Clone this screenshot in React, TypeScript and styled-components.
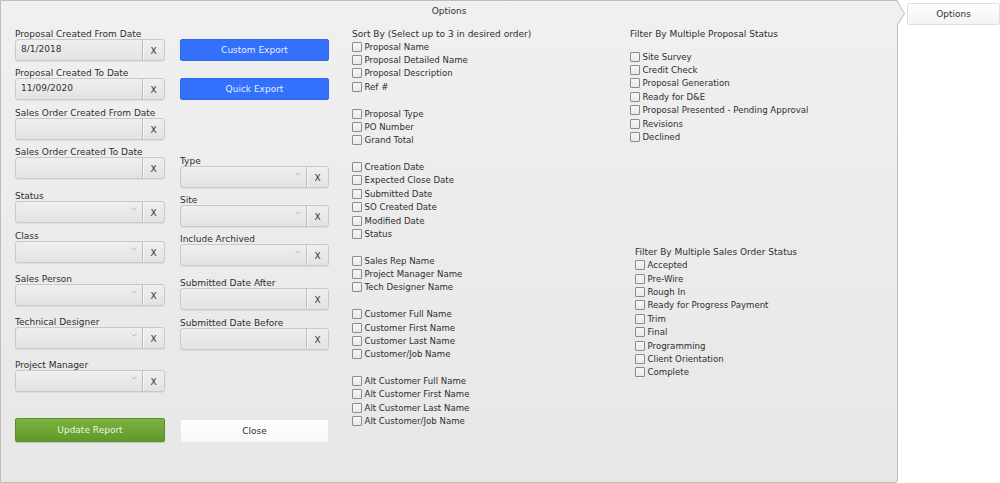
import styled, { createGlobalStyle } from 'styled-components';

const GlobalStyle = createGlobalStyle`
  html, body {
    margin: 0;
    padding: 0;
    background: #fff;
  }

  body {
    font-family: "DejaVu Sans", Verdana, sans-serif;
    font-size: 9px;
    color: #2e2e2e;
  }
`;

const Page = styled.div`
  display: flex;
  align-items: flex-start;
  width: 1000px;
  height: 483px;
  overflow: hidden;
`;

const Panel = styled.section`
  position: relative;
  flex: none;
  box-sizing: border-box;
  width: 898px;
  height: 483px;
  padding-top: 3px;
  border: 1px solid #bdbdbd;
  border-radius: 0 0 3px 0;
  background: linear-gradient(#f0f0f0, #e7e7e7);
`;

const Pointer = styled.svg`
  position: absolute;
  top: 0;
  left: 100%;
`;

const PanelTitle = styled.div`
  line-height: 10px;
  padding-top: 2px;
  text-align: center;
  color: #333;
`;

const Body = styled.div`
  display: flex;
  align-items: flex-start;
  padding: 11px 0 0 14px;
`;

const FormColumn = styled.div<{ $width: number; $gap: number }>`
  display: flex;
  flex-direction: column;
  width: ${props => props.$width}px;
  margin-right: ${props => props.$gap}px;
`;

const Field = styled.div<{ $mt: number }>`
  margin-top: ${props => props.$mt}px;
`;

const Label = styled.div`
  line-height: 10px;
  padding-top: 2px;
  white-space: nowrap;
`;

const InputRow = styled.div`
  display: flex;
  box-sizing: border-box;
  height: 22px;
  border: 1px solid #c9c9c9;
  border-radius: 3px;
  background: linear-gradient(#efefef, #e3e3e3);
  box-shadow: 0 1px 1px rgba(0, 0, 0, 0.06);
`;

const ValueArea = styled.div<{ $select?: boolean }>`
  flex: 1;
  display: flex;
  align-items: ${props => (props.$select ? 'flex-start' : 'center')};
  justify-content: ${props => (props.$select ? 'flex-end' : 'flex-start')};
  padding: ${props => (props.$select ? '5px 5px 0 5px' : '0 5px 2px 5px')};
  color: #333;
`;

const ClearButton = styled.div`
  display: flex;
  align-items: center;
  justify-content: center;
  width: 22px;
  padding-top: 2px;
  box-sizing: border-box;
  border-left: 1px solid #bcbcbc;
  box-shadow: inset 1px 0 0 #f7f7f7;
  font-size: 9px;
  color: #333;
`;

const ActionButton = styled.div<{ $variant: 'blue' | 'green' | 'white'; $mt: number; $height: number }>`
  display: flex;
  align-items: center;
  justify-content: center;
  box-sizing: border-box;
  height: ${props => props.$height}px;
  margin-top: ${props => props.$mt}px;
  border-radius: 2px;
  ${props =>
    props.$variant === 'blue' &&
    `
    background: #3370fb;
    border: 1px solid #2f68ec;
    color: #e6edff;
  `}
  ${props =>
    props.$variant === 'green' &&
    `
    background: linear-gradient(#7bb33f, #5f992b);
    border: 1px solid #5b8e2c;
    color: #e9f3de;
    box-shadow: 0 1px 1px rgba(0, 0, 0, 0.15);
  `}
  ${props =>
    props.$variant === 'white' &&
    `
    background: linear-gradient(#ffffff, #f8f8f8);
    border: 1px solid #e8e8e8;
    color: #2e2e2e;
  `}
`;

const SortColumn = styled.div`
  width: 278px;
  flex: none;
`;

const FilterColumn = styled.div`
  flex: 1;
`;

const FilterBlock = styled.div<{ $mt: number; $indent: number }>`
  margin-top: ${props => props.$mt}px;
  padding-left: ${props => props.$indent}px;
`;

const Heading = styled.div`
  line-height: 10px;
  padding-top: 2px;
  white-space: nowrap;
`;

const CheckList = styled.div<{ $mt: number }>`
  margin-top: ${props => props.$mt}px;
`;

const CheckRow = styled.label`
  display: flex;
  align-items: center;
  height: 13.375px;
  font-size: 8.6px;
  white-space: nowrap;
`;

const Box = styled.span`
  flex: none;
  box-sizing: border-box;
  width: 10px;
  height: 10px;
  margin-right: 2.5px;
  border: 1px solid #8c8c8c;
  border-radius: 1px;
  background: linear-gradient(#f6f6f6, #e9e9e9);
`;

const Spacer = styled.div`
  height: 13.375px;
`;

const Tab = styled.div`
  flex: none;
  display: flex;
  align-items: center;
  justify-content: center;
  box-sizing: border-box;
  width: 93px;
  height: 22px;
  margin: 3px 0 0 9px;
  border: 1px solid #dedede;
  border-radius: 2px;
  background: linear-gradient(#ffffff, #f3f3f3);
  color: #333;
`;

const Chevron = () => (
  <svg width="6" height="4" viewBox="0 0 6 4">
    <polyline points="0.5,0.5 3,3 5.5,0.5" fill="none" stroke="#b8b8b8" strokeWidth="1" />
  </svg>
);

interface FieldProps {
  label: string;
  value?: string;
  select?: boolean;
  mt: number;
}

function InputField({ label, value, select, mt }: FieldProps) {
  return (
    <Field $mt={mt}>
      <Label>{label}</Label>
      <InputRow>
        <ValueArea $select={select}>{select ? <Chevron /> : value}</ValueArea>
        <ClearButton>X</ClearButton>
      </InputRow>
    </Field>
  );
}

function Check({ text }: { text: string }) {
  return (
    <CheckRow>
      <Box />
      {text}
    </CheckRow>
  );
}

const sortGroups = [
  ['Proposal Name', 'Proposal Detailed Name', 'Proposal Description', 'Ref #'],
  ['Proposal Type', 'PO Number', 'Grand Total'],
  ['Creation Date', 'Expected Close Date', 'Submitted Date', 'SO Created Date', 'Modified Date', 'Status'],
  ['Sales Rep Name', 'Project Manager Name', 'Tech Designer Name'],
  ['Customer Full Name', 'Customer First Name', 'Customer Last Name', 'Customer/Job Name'],
  ['Alt Customer Full Name', 'Alt Customer First Name', 'Alt Customer Last Name', 'Alt Customer/Job Name'],
];

const proposalStatuses = [
  'Site Survey',
  'Credit Check',
  'Proposal Generation',
  'Ready for D&E',
  'Proposal Presented - Pending Approval',
  'Revisions',
  'Declined',
];

const salesOrderStatuses = [
  'Accepted',
  'Pre-Wire',
  'Rough In',
  'Ready for Progress Payment',
  'Trim',
  'Final',
  'Programming',
  'Client Orientation',
  'Complete',
];

export default function App() {
  return (
    <>
      <GlobalStyle />
      <Page>
        <Panel>
          <Pointer width="9" height="26" viewBox="0 0 9 26">
            <polygon points="0,1 8,12.5 0,24" fill="#efefef" />
            <polyline points="0.5,1 7.5,12.5 0.5,24" fill="none" stroke="#bdbdbd" strokeWidth="1" />
          </Pointer>
          <PanelTitle>Options</PanelTitle>
          <Body>
            <FormColumn $width={150} $gap={15}>
              <InputField label="Proposal Created From Date" value="8/1/2018" mt={0} />
              <InputField label="Proposal Created To Date" value="11/09/2020" mt={5} />
              <InputField label="Sales Order Created From Date" mt={6} />
              <InputField label="Sales Order Created To Date" mt={5} />
              <InputField label="Status" select mt={10} />
              <InputField label="Class" select mt={6} />
              <InputField label="Sales Person" select mt={9} />
              <InputField label="Technical Designer" select mt={9} />
              <InputField label="Project Manager" select mt={9} />
              <ActionButton $variant="green" $mt={26} $height={24}>
                Update Report
              </ActionButton>
            </FormColumn>

            <FormColumn $width={149} $gap={23}>
              <ActionButton $variant="blue" $mt={12} $height={22}>
                Custom Export
              </ActionButton>
              <ActionButton $variant="blue" $mt={17} $height={22}>
                Quick Export
              </ActionButton>
              <InputField label="Type" select mt={54} />
              <InputField label="Site" select mt={5} />
              <InputField label="Include Archived" select mt={5} />
              <InputField label="Submitted Date After" mt={10} />
              <InputField label="Submitted Date Before" mt={6} />
              <ActionButton $variant="white" $mt={69} $height={24}>
                Close
              </ActionButton>
            </FormColumn>

            <SortColumn>
              <Heading>Sort By (Select up to 3 in desired order)</Heading>
              <CheckList $mt={1}>
                {sortGroups.map((group, index) => (
                  <div key={index}>
                    {index > 0 && <Spacer />}
                    {group.map(item => (
                      <Check key={item} text={item} />
                    ))}
                  </div>
                ))}
              </CheckList>
            </SortColumn>

            <FilterColumn>
              <FilterBlock $mt={0} $indent={0}>
                <Heading>Filter By Multiple Proposal Status</Heading>
                <CheckList $mt={11}>
                  {proposalStatuses.map(item => (
                    <Check key={item} text={item} />
                  ))}
                </CheckList>
              </FilterBlock>
              <FilterBlock $mt={101} $indent={5}>
                <Heading>Filter By Multiple Sales Order Status</Heading>
                <CheckList $mt={2}>
                  {salesOrderStatuses.map(item => (
                    <Check key={item} text={item} />
                  ))}
                </CheckList>
              </FilterBlock>
            </FilterColumn>
          </Body>
        </Panel>
        <Tab>Options</Tab>
      </Page>
    </>
  );
}
